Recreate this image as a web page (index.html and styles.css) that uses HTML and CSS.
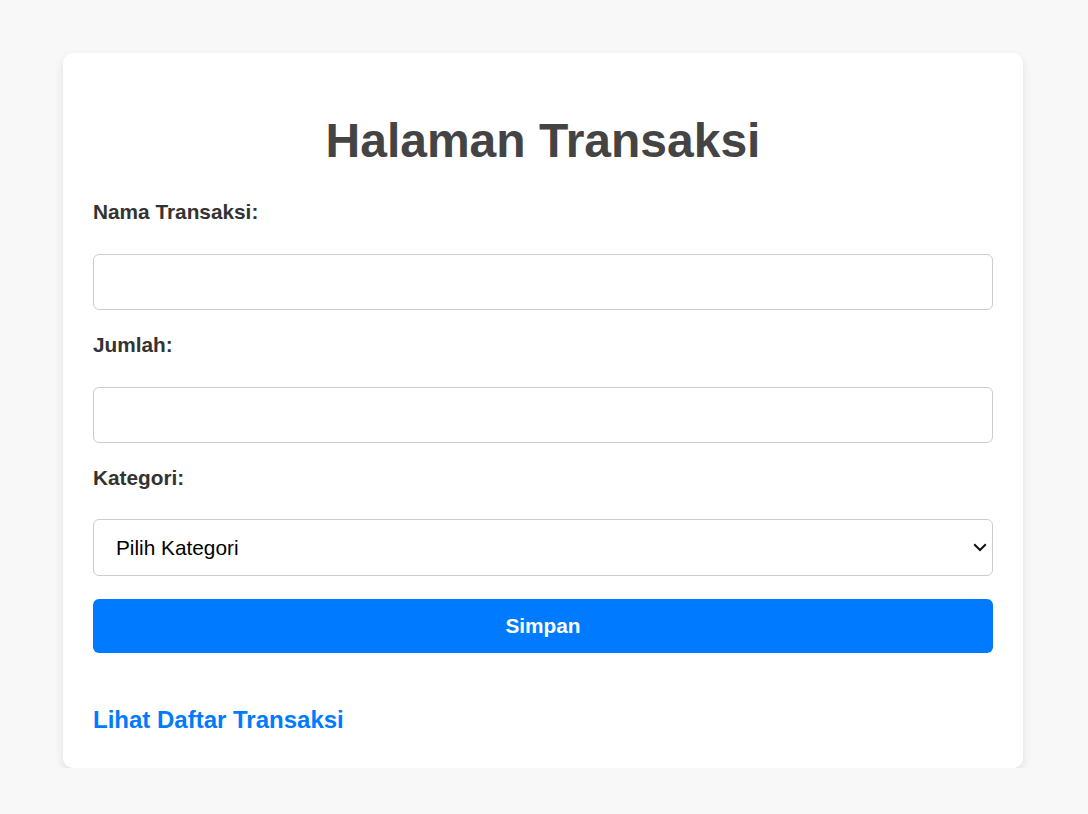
FILE: index.html
```html
<!DOCTYPE html>
<html lang="id">
<head>
<meta charset="utf-8">
<title>Halaman Transaksi</title>
<link rel="stylesheet" href="styles.css">
</head>
<body>
<div class="card">
  <h1 class="title">Halaman Transaksi</h1>
  <form class="form">
    <label class="label" for="nama">Nama Transaksi:</label>
    <input class="field" type="text" id="nama">
    <label class="label" for="jumlah">Jumlah:</label>
    <input class="field" type="text" id="jumlah">
    <label class="label" for="kategori">Kategori:</label>
    <div class="select-wrap">
      <select class="field select" id="kategori">
        <option>Pilih Kategori</option>
      </select>
      <svg class="chevron" width="14" height="9" viewBox="0 0 14 9" aria-hidden="true">
        <path d="M1.2 1.2 L7 7 L12.8 1.2" fill="none" stroke="#111" stroke-width="2"/>
      </svg>
    </div>
    <button class="btn" type="button">Simpan</button>
  </form>
  <div class="footer"><a class="link" href="#">Lihat Daftar Transaksi</a></div>
</div>
</body>
</html>
```
FILE: styles.css
```css
html, body {
  margin: 0;
  padding: 0;
}
body {
  background: #f8f8f8;
  font-family: "Liberation Sans", Arial, sans-serif;
  padding: 53px 2px 0 0;
}
.card {
  width: 960px;
  box-sizing: border-box;
  margin: 0 auto;
  background: #fff;
  border-radius: 10px;
  box-shadow: 0 4px 10px rgba(0, 0, 0, 0.1);
  padding: 30px 30px 31px;
}
.title {
  margin: 31px 0 32px;
  text-align: center;
  font-size: 48px;
  font-weight: bold;
  color: #444;
  line-height: 54px;
}
.form {
  display: flex;
  flex-direction: column;
}
.label {
  display: block;
  font-size: 20.8px;
  font-weight: bold;
  color: #333;
  line-height: 24px;
  margin-bottom: 30px;
}
.field {
  display: block;
  width: 100%;
  box-sizing: border-box;
  height: 56px;
  padding: 0 15px;
  font-family: "Liberation Sans", Arial, sans-serif;
  font-size: 20.8px;
  border: 1px solid #ccc;
  border-radius: 6px;
  margin: 0 0 23px;
  background: #fff;
  color: #000;
}
.select-wrap {
  position: relative;
  margin-top: -1px;
}
.select {
  height: 57px;
  padding-left: 22px;
  -webkit-appearance: none;
  appearance: none;
}
.chevron {
  position: absolute;
  right: 6px;
  top: 24px;
  pointer-events: none;
}
.btn {
  display: block;
  width: 100%;
  height: 54px;
  border: none;
  border-radius: 6px;
  background: #007bff;
  color: #fff;
  font-family: "Liberation Sans", Arial, sans-serif;
  font-size: 20.8px;
  font-weight: bold;
  cursor: pointer;
}
.footer {
  margin-top: 53px;
  line-height: 28px;
}
.link {
  font-size: 24px;
  font-weight: bold;
  color: #007bff;
  text-decoration: none;
}
```
